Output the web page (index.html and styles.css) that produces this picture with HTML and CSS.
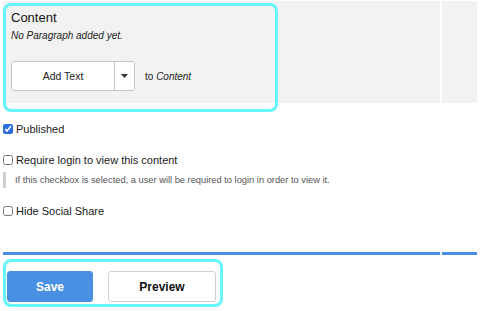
FILE: index.html
```html
<!DOCTYPE html>
<html lang="en">
<head>
<meta charset="utf-8">
<title>Content form</title>
<link rel="stylesheet" href="styles.css">
</head>
<body>
<div class="page">
  <div class="cols top-row">
    <div class="panel main-panel">
      <div class="field">
        <div class="field-title">Content</div>
        <div class="field-empty">No Paragraph added yet.</div>
        <div class="add-row">
          <div class="split-btn">
            <button class="split-main" type="button">Add Text</button>
            <button class="split-toggle" type="button" aria-label="More">
              <svg width="7" height="4" viewBox="0 0 7 4"><path d="M0 0h7L3.5 4z" fill="#333"/></svg>
            </button>
          </div>
          <span class="add-to">to <em>Content</em></span>
        </div>
        <div class="highlight highlight-top"></div>
      </div>
    </div>
    <div class="panel side-panel"></div>
  </div>

  <div class="options">
    <label class="check-row"><input type="checkbox" checked><span>Published</span></label>
    <div class="check-group">
      <label class="check-row"><input type="checkbox"><span>Require login to view this content</span></label>
      <div class="help">If this checkbox is selected, a user will be required to login in order to view it.</div>
    </div>
    <label class="check-row"><input type="checkbox"><span>Hide Social Share</span></label>
  </div>

  <div class="cols rule-row">
    <div class="rule"></div>
    <div class="rule"></div>
  </div>

  <div class="actions">
    <button class="btn btn-primary" type="button">Save</button>
    <button class="btn btn-default" type="button">Preview</button>
    <div class="highlight highlight-bottom"></div>
  </div>
</div>
</body>
</html>
```

FILE: styles.css
```css
* { box-sizing: border-box; }
html, body { margin: 0; padding: 0; background: #fff; }
body {
  font-family: "Liberation Sans", Arial, Helvetica, sans-serif;
  color: #1a1a1a;
  width: 480px;
  height: 311px;
  overflow: hidden;
}
.page { padding: 1px 3px 0 3px; }

.cols {
  display: grid;
  grid-template-columns: 437px 35px;
  column-gap: 2px;
}

.panel { background: #f2f2f2; height: 102px; }
.main-panel { position: relative; }

.field { position: relative; padding: 9px 8px 0 8px; height: 100%; }
.field-title { font-size: 13px; line-height: 16px; color: #111; }
.field-empty { font-size: 10px; font-style: italic; line-height: 14px; margin-top: 3px; color: #222; }

.add-row { display: flex; align-items: center; margin-top: 18px; }
.split-btn {
  display: flex;
  height: 30px;
  border: 1px solid #c4c4c4;
  border-radius: 3px;
  background: #fff;
  overflow: hidden;
}
.split-main {
  width: 103px;
  border: 0;
  border-right: 1px solid #c4c4c4;
  background: #fff;
  font-family: inherit;
  font-size: 10.5px;
  color: #222;
  padding: 0;
}
.split-toggle {
  width: 19px;
  border: 0;
  background: #fff;
  padding: 0;
  display: flex;
  align-items: center;
  justify-content: center;
}
.add-to { margin-left: 10px; font-size: 10px; color: #222; }
.add-to em { font-style: italic; }

.highlight {
  position: absolute;
  border: 3px solid #66f4fd;
  border-radius: 8px;
  pointer-events: none;
}
.highlight-top { left: 0; top: 2px; width: 275px; height: 109px; }

.options { padding-top: 19px; }
.check-row {
  display: flex;
  align-items: center;
  font-size: 11px;
  line-height: 14px;
  color: #1a1a1a;
}
.check-row input {
  width: 10px;
  height: 10px;
  margin: 0 3px 0 0;
  accent-color: #2c6ee0;
}
.check-group { margin-top: 17px; }
.help {
  margin-top: 5px;
  border-left: 3px solid #cfcfcf;
  padding-left: 9px;
  font-size: 9.3px;
  line-height: 16px;
  color: #555;
}
.check-group + .check-row { margin-top: 16px; }

.rule-row { margin-top: 34px; }
.rule { height: 3px; background: #4a90e2; }

.actions {
  position: relative;
  display: flex;
  align-items: center;
  gap: 15px;
  padding: 16px 0 0 4px;
}
.btn {
  height: 31px;
  border-radius: 3px;
  font-family: inherit;
  font-size: 12px;
  font-weight: bold;
  padding: 0;
}
.btn-primary {
  width: 86px;
  background: #4a90e2;
  color: #fff;
  border: 1px solid #4a90e2;
}
.btn-default {
  width: 108px;
  background: #fff;
  color: #111;
  border: 1px solid #cfcfcf;
}
.highlight-bottom { left: 0; top: 4px; width: 220px; height: 48px; }
```
